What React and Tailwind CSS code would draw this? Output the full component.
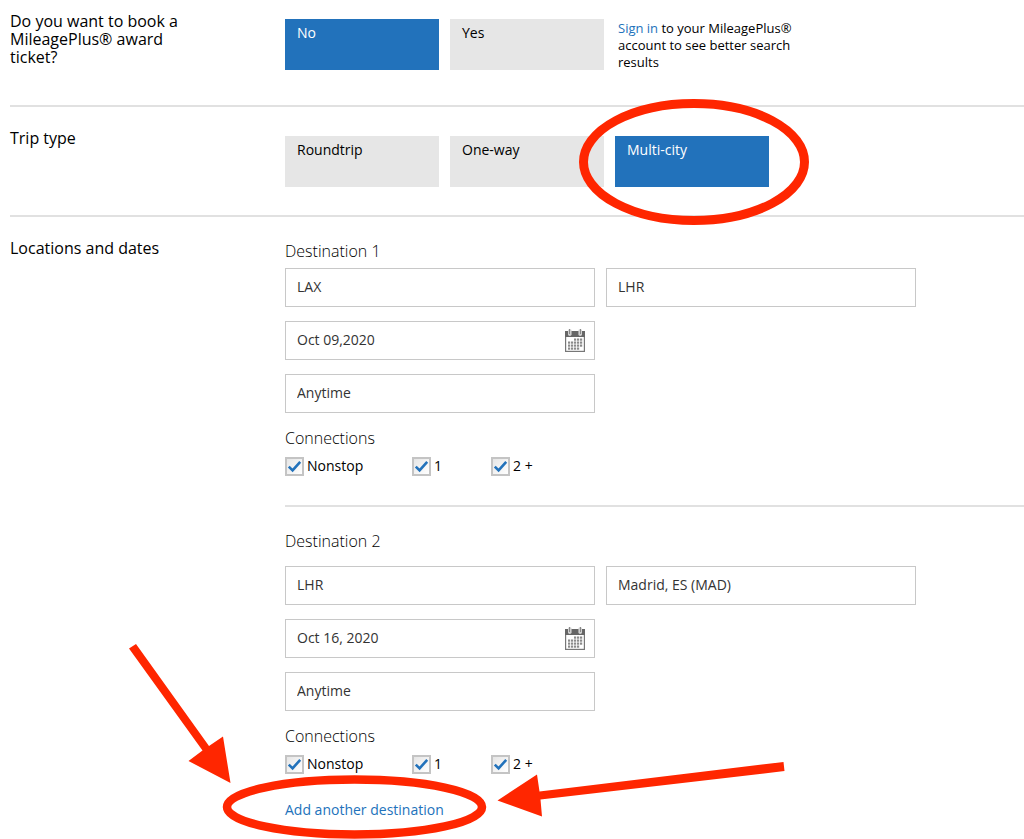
import React, { useState } from 'react';

const fieldClass =
  'h-[39px] w-full appearance-none border border-[#c8c8c8] bg-white px-[11px] pb-0.5 text-sm text-[#333333] outline-none';

function CalendarIcon() {
  const dots = [];
  for (let row = 0; row < 4; row++) {
    for (let col = 0; col < 5; col++) {
      // the month starts on the third column and ends before the last one
      if (row === 0 && col < 2) continue;
      if (row === 3 && col > 3) continue;
      dots.push(<rect key={`${row}-${col}`} x={3 + col * 3} y={9.5 + row * 3} width="2.2" height="2.2" fill="#8a8a8a" />);
    }
  }
  return (
    <svg width="20" height="23" viewBox="0 0 20 23" aria-hidden="true">
      <rect x="0.6" y="2.6" width="18.8" height="19.8" fill="#fff" stroke="#777777" strokeWidth="1.2" />
      <rect x="0" y="2" width="20" height="6" fill="#666666" />
      {dots}
      <rect x="3" y="0" width="3.6" height="7" rx="1.8" fill="#cfcfcf" />
      <rect x="13.4" y="0" width="3.6" height="7" rx="1.8" fill="#cfcfcf" />
      <rect x="4" y="0" width="1" height="5" fill="#888888" />
      <rect x="15" y="0" width="1" height="5" fill="#888888" />
    </svg>
  );
}

function Choice({ selected, onClick, children }) {
  return (
    <button
      type="button"
      onClick={onClick}
      aria-pressed={selected}
      className={`flex h-[51px] w-[154px] items-start px-3 pt-1 text-left text-sm ${
        selected ? 'bg-[#2272bb] text-white' : 'bg-[#e6e6e6] text-black'
      }`}
    >
      {children}
    </button>
  );
}

function Check({ id, label, className }) {
  return (
    <div className={`flex items-center gap-[3px] ${className}`}>
      <span className="relative flex">
        <input
          id={id}
          type="checkbox"
          defaultChecked
          className="peer h-[19px] w-[19px] appearance-none border-2 border-[#c4c4c4] bg-gradient-to-br from-[#e6e6e6] to-white"
        />
        <svg
          className="pointer-events-none absolute inset-0 hidden peer-checked:block"
          width="19"
          height="19"
          viewBox="0 0 19 19"
          aria-hidden="true"
        >
          <path d="M3.8 9.6 L7.6 13.4 L15.2 4.8" fill="none" stroke="#2272bb" strokeWidth="2.6" />
        </svg>
      </span>
      <label htmlFor={id} className="text-sm text-black">
        {label}
      </label>
    </div>
  );
}

function Destination({ number, from, to, date, titleClass }) {
  const id = `dest-${number}`;
  return (
    <fieldset>
      <legend className={`text-base font-light leading-6 text-black ${titleClass}`}>Destination {number}</legend>
      <div className="grid max-w-[631px] grid-cols-2 gap-x-[11px] gap-y-[14px]">
        <input aria-label="From" id={`${id}-from`} className={fieldClass} defaultValue={from} />
        <input aria-label="To" id={`${id}-to`} className={fieldClass} defaultValue={to} />
        <div className="relative col-start-1">
          <input aria-label="Date" id={`${id}-date`} className={fieldClass} defaultValue={date} />
          <button type="button" aria-label="Open calendar" className="absolute right-[10px] top-2">
            <CalendarIcon />
          </button>
        </div>
        <select aria-label="Time" id={`${id}-time`} className={`col-start-1 ${fieldClass}`}>
          <option>Anytime</option>
          <option>Morning</option>
          <option>Afternoon</option>
        </select>
      </div>
      <p className="mt-[13px] text-base font-light leading-6 text-black">Connections</p>
      <div className="mt-[6px] flex h-5 items-center">
        <Check id={`${id}-nonstop`} label="Nonstop" className="w-[127px]" />
        <Check id={`${id}-one`} label="1" className="w-[79px]" />
        <Check id={`${id}-two`} label="2 +" className="" />
      </div>
    </fieldset>
  );
}

export default function App() {
  const [award, setAward] = useState('No');
  const [trip, setTrip] = useState('Multi-city');

  return (
    <main className="overflow-hidden bg-white pl-[10px] font-['Open_Sans',sans-serif] text-black">
      {/* Award ticket */}
      <section className="grid grid-cols-[275px_1fr] border-b-2 border-[#e1e1e1] pb-[34px] pt-3">
        <h2 className="w-[190px] text-base leading-[18px]">Do you want to book a MileagePlus® award ticket?</h2>
        <div className="flex gap-[11px] pt-[7px]">
          {['No', 'Yes'].map((option) => (
            <Choice key={option} selected={award === option} onClick={() => setAward(option)}>
              {option}
            </Choice>
          ))}
          <p className="w-[190px] pl-[3px] pt-px text-[13px] leading-[17px]">
            <a href="#signin" className="text-[#2272bb]">Sign in</a> to your MileagePlus® account to see better search results
          </p>
        </div>
      </section>

      {/* Trip type */}
      <section className="grid grid-cols-[275px_1fr] border-b-2 border-[#e1e1e1] pb-7 pt-[22px]">
        <h2 className="text-base leading-[18px]">Trip type</h2>
        <div className="flex gap-[11px] pt-[7px]">
          {['Roundtrip', 'One-way'].map((option) => (
            <Choice key={option} selected={trip === option} onClick={() => setTrip(option)}>
              {option}
            </Choice>
          ))}
          <div className="relative">
            <Choice selected={trip === 'Multi-city'} onClick={() => setTrip('Multi-city')}>
              Multi-city
            </Choice>
            <svg
              className="pointer-events-none absolute -left-9 -top-[37px] max-w-none"
              width="230"
              height="126"
              viewBox="0 0 230 126"
              aria-hidden="true"
            >
              <ellipse cx="115" cy="63" rx="110.5" ry="58.5" fill="none" stroke="#ff2600" strokeWidth="9" />
            </svg>
          </div>
        </div>
      </section>

      {/* Locations and dates */}
      <section className="grid grid-cols-[275px_1fr] pt-[22px]">
        <h2 className="text-base leading-[18px]">Locations and dates</h2>
        <div>
          <Destination number={1} from="LAX" to="LHR" date="Oct 09,2020" titleClass="pb-[5px]" />
          <div className="mt-[29px] border-t-2 border-[#e1e1e1] pt-[22px]">
            <Destination number={2} from="LHR" to="Madrid, ES (MAD)" date="Oct 16, 2020" titleClass="pb-[13px]" />
          </div>
          <div className="relative mt-[26px] pb-[19px]">
            <a href="#add" className="block w-fit text-sm leading-5 text-[#2272bb]">
              Add another destination
            </a>
            {/* Callout ring and arrows */}
            <svg
              className="pointer-events-none absolute -left-[165px] -top-[160px] max-w-none"
              width="680"
              height="199"
              viewBox="120 640 680 199"
              aria-hidden="true"
            >
              <ellipse cx="354.5" cy="807" rx="127.5" ry="27.5" fill="none" stroke="#ff2600" strokeWidth="8.5" />
              <path d="M129 648.5 L136 644 L209 746 L223 736.5 L230.5 783 L188.5 761 L202.5 750.5 Z" fill="#ff2600" />
              <path d="M783.5 762 L784.5 771 L540.5 799.5 L542 816.5 L497.5 800.5 L537 774.5 L539.5 791.5 Z" fill="#ff2600" />
            </svg>
          </div>
        </div>
      </section>
    </main>
  );
}
